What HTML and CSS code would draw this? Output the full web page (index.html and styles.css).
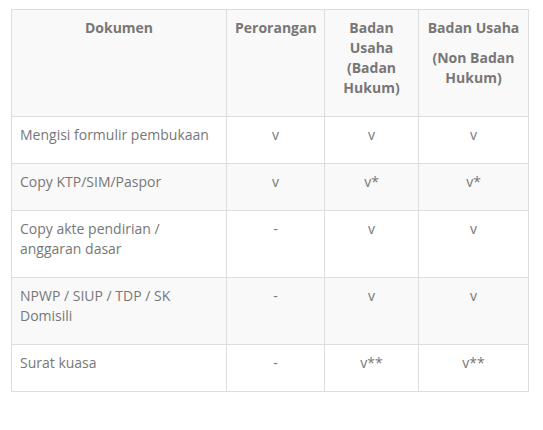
FILE: index.html
```html
<!DOCTYPE html>
<html>
<head>
<meta charset="utf-8">
<link rel="stylesheet" href="styles.css">
</head>
<body>
<table class="docs">
  <colgroup>
    <col class="c1"><col class="c2"><col class="c3"><col class="c4">
  </colgroup>
  <thead>
    <tr>
      <th><p>Dokumen</p></th>
      <th><p>Perorangan</p></th>
      <th><p>Badan Usaha (Badan Hukum)</p></th>
      <th><p>Badan Usaha</p><p>(Non Badan Hukum)</p></th>
    </tr>
  </thead>
  <tbody>
    <tr><td><p>Mengisi formulir pembukaan</p></td><td><p>v</p></td><td><p>v</p></td><td><p>v</p></td></tr>
    <tr><td><p>Copy KTP/SIM/Paspor</p></td><td><p>v</p></td><td><p>v*</p></td><td><p>v*</p></td></tr>
    <tr><td><p>Copy akte pendirian / anggaran dasar</p></td><td><p>-</p></td><td><p>v</p></td><td><p>v</p></td></tr>
    <tr><td><p>NPWP / SIUP / TDP / SK Domisili</p></td><td><p>-</p></td><td><p>v</p></td><td><p>v</p></td></tr>
    <tr><td><p>Surat kuasa</p></td><td><p>-</p></td><td><p>v**</p></td><td><p>v**</p></td></tr>
  </tbody>
</table>
</body>
</html>
```
FILE: styles.css
```css
html, body {
  margin: 0;
  background: #fff;
}
body {
  padding: 9px 11px;
  font-family: "Open Sans", "Liberation Sans", sans-serif;
  font-size: 14px;
  line-height: 20px;
  color: #777;
}
.docs {
  border-collapse: collapse;
  table-layout: fixed;
  width: 517px;
}
.c1 { width: 215px; }
.c2 { width: 98px; }
.c3 { width: 94px; }
.c4 { width: 110px; }
.docs th, .docs td {
  border: 1px solid #ddd;
  padding: 8px;
  vertical-align: top;
  text-align: center;
}
.docs th {
  font-weight: 700;
  color: #777;
  background: #f9f9f9;
}
.docs td:first-child {
  text-align: left;
}
.docs p {
  margin: 0 0 10px;
}
.docs tbody tr:nth-child(even) td {
  background: #f9f9f9;
}
```
